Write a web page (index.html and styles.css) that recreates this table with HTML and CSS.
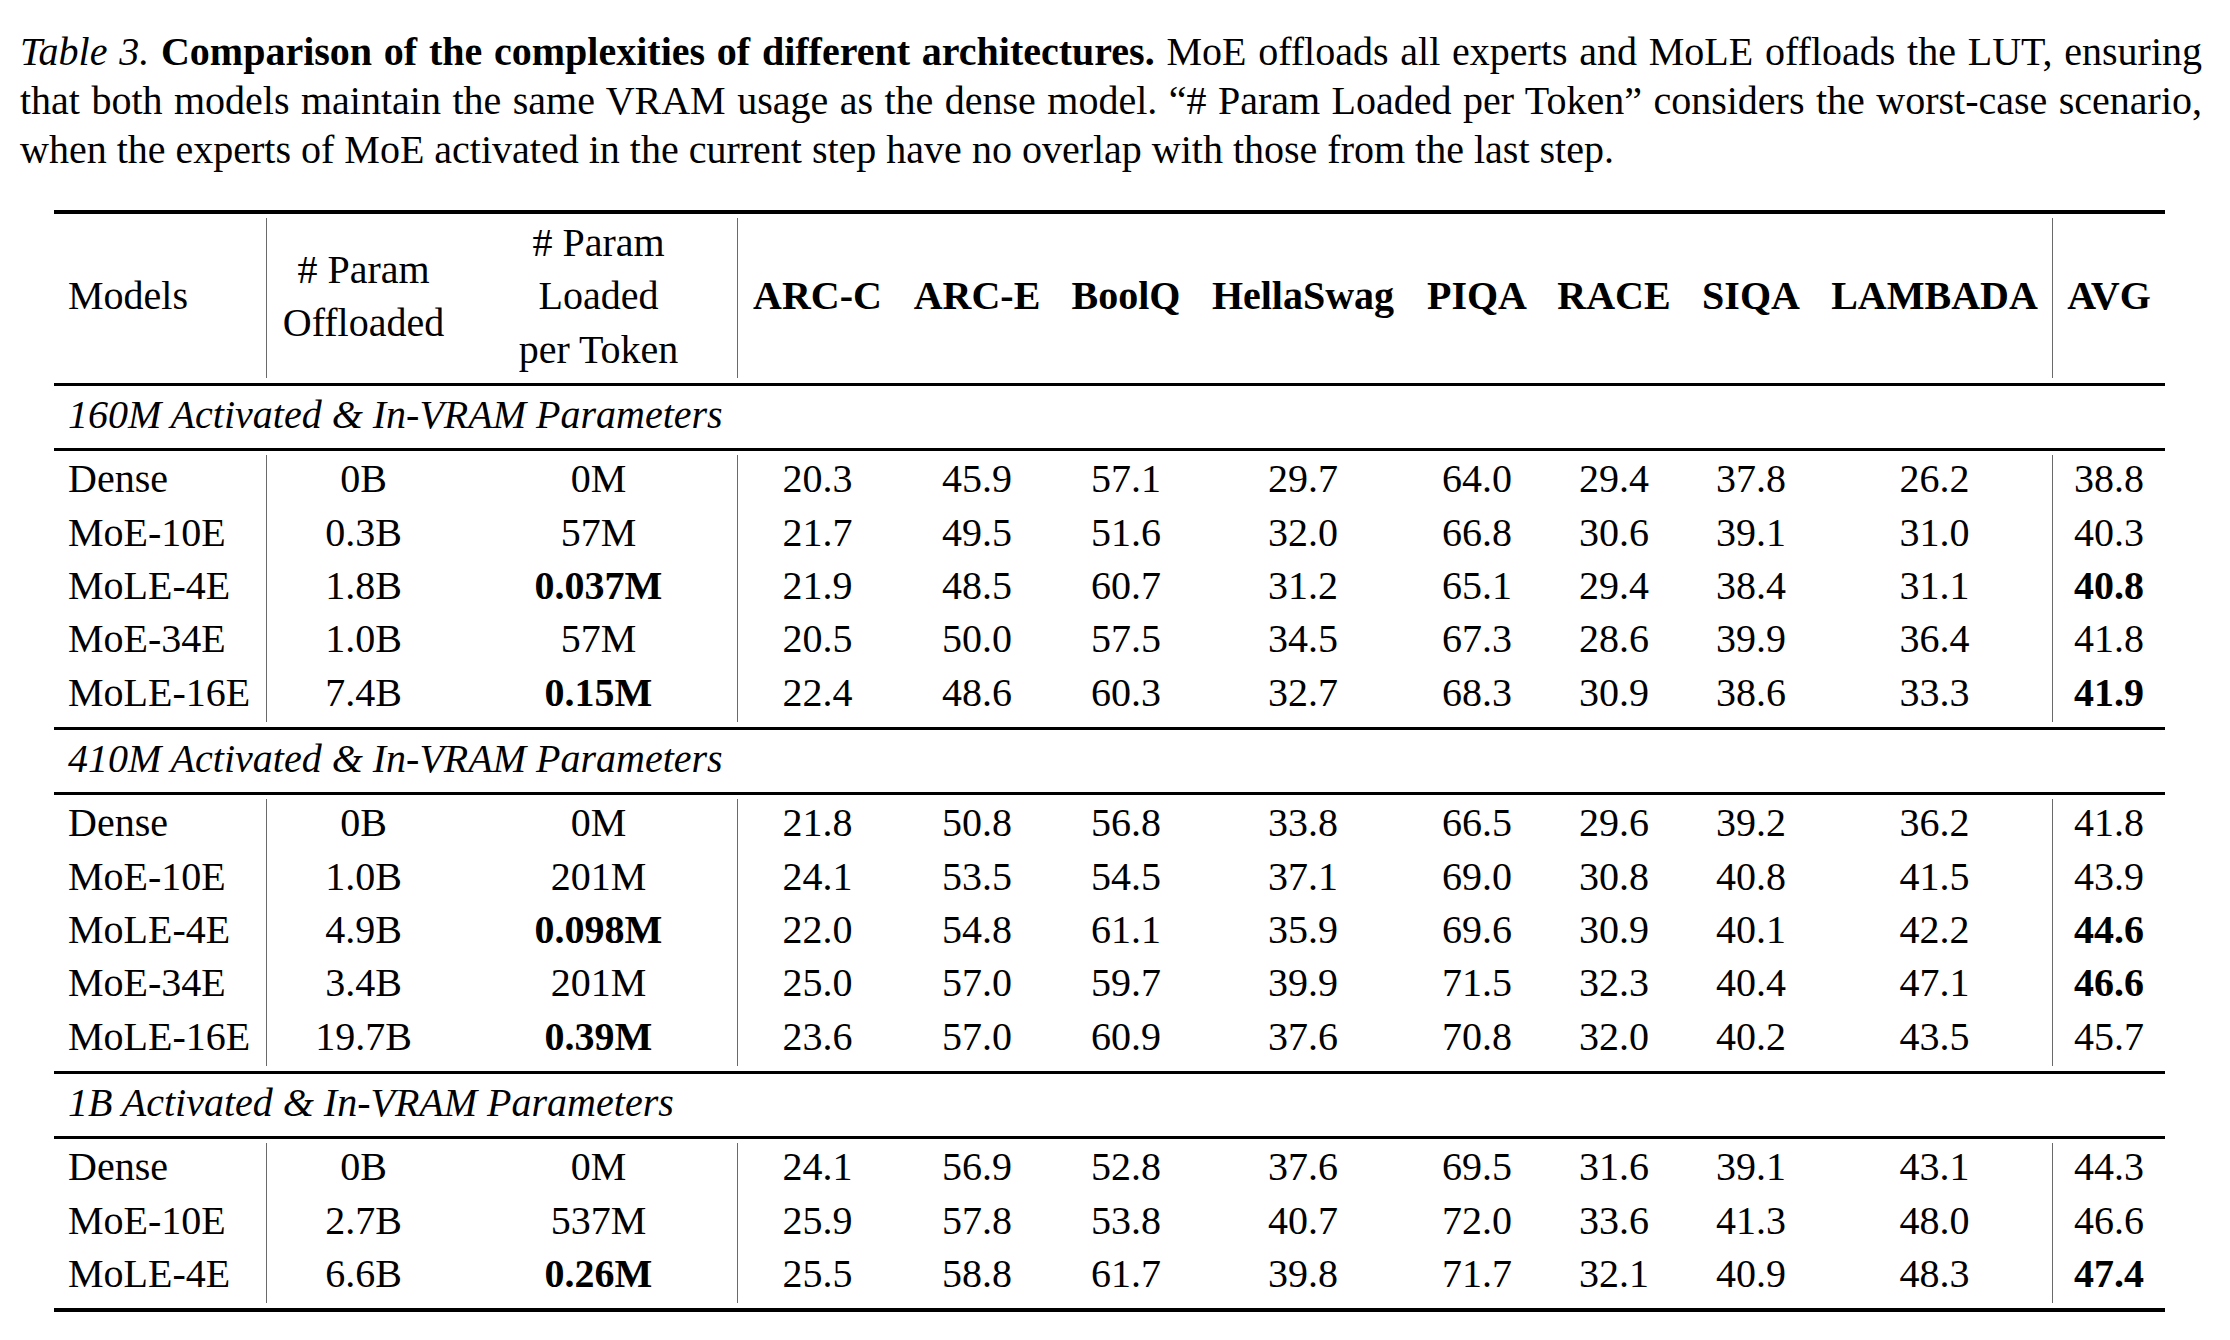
FILE: index.html
```html
<!DOCTYPE html>
<html lang="en">
<head>
<meta charset="utf-8">
<title>Table 3</title>
<link rel="stylesheet" href="styles.css">
</head>
<body>
<div class="page">
  <p class="caption"><span class="cap-label">Table 3.</span> <span class="cap-title">Comparison of the complexities of different architectures.</span> <span class="cap-text">MoE offloads all experts and MoLE offloads the LUT, ensuring that both models maintain the same VRAM usage as the dense model. “# Param Loaded per Token” considers the worst-case scenario, when the experts of MoE activated in the current step have no overlap with those from the last step.</span></p>

  <table class="results">
    <colgroup>
      <col class="c-model">
      <col class="c-off">
      <col class="c-load">
      <col class="c-arcc">
      <col class="c-arce">
      <col class="c-boolq">
      <col class="c-hella">
      <col class="c-piqa">
      <col class="c-race">
      <col class="c-siqa">
      <col class="c-lambada">
      <col class="c-avg">
    </colgroup>
    <thead>
      <tr class="rule thick"><td colspan="12"></td></tr>
      <tr class="gap"><td colspan="12"></td></tr>
      <tr class="head">
        <td class="name">Models</td>
        <td class="vl">#&nbsp;Param<br>Offloaded</td>
        <td class="tall"><div class="stack"># Param<br>Loaded<br>per Token</div></td>
        <th class="vl">ARC-C</th>
        <th>ARC-E</th>
        <th>BoolQ</th>
        <th>HellaSwag</th>
        <th>PIQA</th>
        <th>RACE</th>
        <th>SIQA</th>
        <th>LAMBADA</th>
        <th class="vl">AVG</th>
      </tr>
      <tr class="gap gap-end"><td colspan="12"></td></tr>
    </thead>

    <tbody>
      <tr class="group"><td colspan="12">160M Activated &amp; In-VRAM Parameters</td></tr>
      <tr class="gap"><td colspan="12"></td></tr>
      <tr class="row"><td class="name">Dense</td><td class="vl">0B</td><td>0M</td><td class="vl">20.3</td><td>45.9</td><td>57.1</td><td>29.7</td><td>64.0</td><td>29.4</td><td>37.8</td><td>26.2</td><td class="vl">38.8</td></tr>
      <tr class="row"><td class="name">MoE-10E</td><td class="vl">0.3B</td><td>57M</td><td class="vl">21.7</td><td>49.5</td><td>51.6</td><td>32.0</td><td>66.8</td><td>30.6</td><td>39.1</td><td>31.0</td><td class="vl">40.3</td></tr>
      <tr class="row"><td class="name">MoLE-4E</td><td class="vl">1.8B</td><td class="best">0.037M</td><td class="vl">21.9</td><td>48.5</td><td>60.7</td><td>31.2</td><td>65.1</td><td>29.4</td><td>38.4</td><td>31.1</td><td class="vl best">40.8</td></tr>
      <tr class="row"><td class="name">MoE-34E</td><td class="vl">1.0B</td><td>57M</td><td class="vl">20.5</td><td>50.0</td><td>57.5</td><td>34.5</td><td>67.3</td><td>28.6</td><td>39.9</td><td>36.4</td><td class="vl">41.8</td></tr>
      <tr class="row"><td class="name">MoLE-16E</td><td class="vl">7.4B</td><td class="best">0.15M</td><td class="vl">22.4</td><td>48.6</td><td>60.3</td><td>32.7</td><td>68.3</td><td>30.9</td><td>38.6</td><td>33.3</td><td class="vl best">41.9</td></tr>
      <tr class="gap gap-end"><td colspan="12"></td></tr>
    </tbody>

    <tbody>
      <tr class="group"><td colspan="12">410M Activated &amp; In-VRAM Parameters</td></tr>
      <tr class="gap"><td colspan="12"></td></tr>
      <tr class="row"><td class="name">Dense</td><td class="vl">0B</td><td>0M</td><td class="vl">21.8</td><td>50.8</td><td>56.8</td><td>33.8</td><td>66.5</td><td>29.6</td><td>39.2</td><td>36.2</td><td class="vl">41.8</td></tr>
      <tr class="row"><td class="name">MoE-10E</td><td class="vl">1.0B</td><td>201M</td><td class="vl">24.1</td><td>53.5</td><td>54.5</td><td>37.1</td><td>69.0</td><td>30.8</td><td>40.8</td><td>41.5</td><td class="vl">43.9</td></tr>
      <tr class="row"><td class="name">MoLE-4E</td><td class="vl">4.9B</td><td class="best">0.098M</td><td class="vl">22.0</td><td>54.8</td><td>61.1</td><td>35.9</td><td>69.6</td><td>30.9</td><td>40.1</td><td>42.2</td><td class="vl best">44.6</td></tr>
      <tr class="row"><td class="name">MoE-34E</td><td class="vl">3.4B</td><td>201M</td><td class="vl">25.0</td><td>57.0</td><td>59.7</td><td>39.9</td><td>71.5</td><td>32.3</td><td>40.4</td><td>47.1</td><td class="vl best">46.6</td></tr>
      <tr class="row"><td class="name">MoLE-16E</td><td class="vl">19.7B</td><td class="best">0.39M</td><td class="vl">23.6</td><td>57.0</td><td>60.9</td><td>37.6</td><td>70.8</td><td>32.0</td><td>40.2</td><td>43.5</td><td class="vl">45.7</td></tr>
      <tr class="gap gap-end"><td colspan="12"></td></tr>
    </tbody>

    <tbody>
      <tr class="group"><td colspan="12">1B Activated &amp; In-VRAM Parameters</td></tr>
      <tr class="gap"><td colspan="12"></td></tr>
      <tr class="row"><td class="name">Dense</td><td class="vl">0B</td><td>0M</td><td class="vl">24.1</td><td>56.9</td><td>52.8</td><td>37.6</td><td>69.5</td><td>31.6</td><td>39.1</td><td>43.1</td><td class="vl">44.3</td></tr>
      <tr class="row"><td class="name">MoE-10E</td><td class="vl">2.7B</td><td>537M</td><td class="vl">25.9</td><td>57.8</td><td>53.8</td><td>40.7</td><td>72.0</td><td>33.6</td><td>41.3</td><td>48.0</td><td class="vl">46.6</td></tr>
      <tr class="row"><td class="name">MoLE-4E</td><td class="vl">6.6B</td><td class="best">0.26M</td><td class="vl">25.5</td><td>58.8</td><td>61.7</td><td>39.8</td><td>71.7</td><td>32.1</td><td>40.9</td><td>48.3</td><td class="vl best">47.4</td></tr>
      <tr class="gap gap-end"><td colspan="12"></td></tr>
      <tr class="rule thick"><td colspan="12"></td></tr>
    </tbody>
  </table>
</div>
</body>
</html>
```

FILE: styles.css
```css
html, body {
  margin: 0;
  padding: 0;
  background: #ffffff;
}

body {
  font-family: "Liberation Serif", "Times New Roman", serif;
  font-size: 40px;
  color: #000000;
}

.page {
  padding: 27px 28px 0 20px;
}

.caption {
  margin: 0;
  line-height: 49px;
  text-align: justify;
}

.cap-label {
  font-style: italic;
}

.cap-title {
  font-weight: 700;
}

/* ---------- table ---------- */
.results {
  margin: 36px 0 0 34px;
  width: 2111px;
  table-layout: fixed;
  border-collapse: separate;
  border-spacing: 0;
}

.c-model   { width: 212px; }
.c-off     { width: 194px; }
.c-load    { width: 277px; }
.c-arcc    { width: 160px; }
.c-arce    { width: 160px; }
.c-boolq   { width: 138px; }
.c-hella   { width: 216px; }
.c-piqa    { width: 132px; }
.c-race    { width: 142px; }
.c-siqa    { width: 132px; }
.c-lambada { width: 235px; }
.c-avg     { width: 113px; }

.results td,
.results th {
  padding: 0;
  text-align: center;
  white-space: nowrap;
}

.results .vl {
  border-left: 1px solid #6a6a6a;
}

.results .name {
  text-align: left;
  padding-left: 14px;
}

/* rules and gaps */
.rule td {
  height: 0;
  border-top: 3px solid #000;
}

.rule.thick td {
  border-top-width: 4px;
}

.gap td {
  height: 4px;
}

.gap.gap-end td {
  height: 5px;
}

/* header */
.head td,
.head th {
  line-height: 53.4px;
  vertical-align: middle;
  padding-bottom: 4px;
}

.head th {
  font-weight: 700;
}

.head .name {
  padding-left: 14px;
}

.head .tall {
  padding-bottom: 0;
}

.stack {
  margin: -2px 0 2px;
}

/* group label rows */
.group td {
  text-align: left;
  font-style: italic;
  line-height: 54px;
  padding: 2px 0 6px 14px;
  border-top: 3px solid #000;
  border-bottom: 3px solid #000;
}

/* data rows */
.row td {
  line-height: 44px;
  padding-top: 2px;
  padding-bottom: 7.4px;
  vertical-align: top;
}

.row td.name {
  padding-left: 14px;
}

.row .best {
  font-weight: 700;
}
```
